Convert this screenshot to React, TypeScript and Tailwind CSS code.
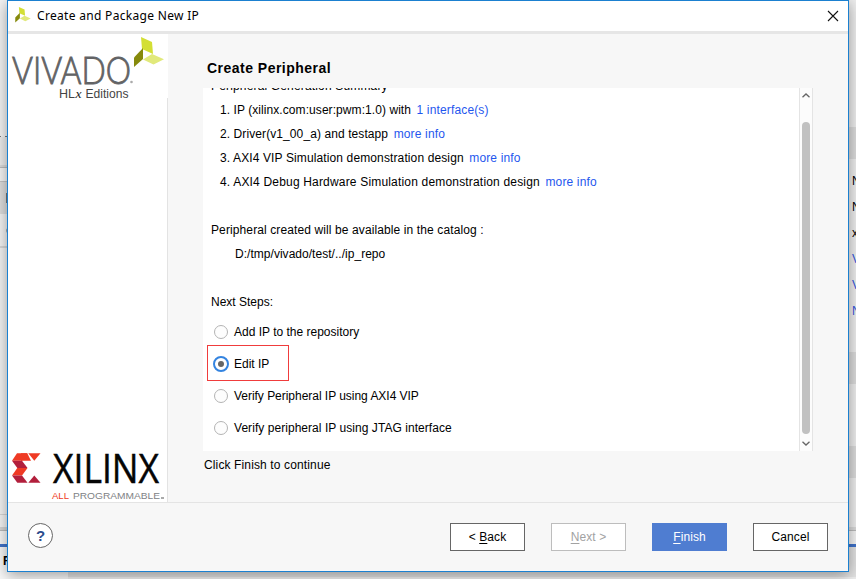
import React from "react";

const sans = "font-['Liberation_Sans',Arial,sans-serif]";

function LeafShapes() {
  return (
    <>
      <path d="M7 0L18 5L19 17L8 12Z" fill="#d3df35" />
      <path d="M0 20.5L9 11L9 22L0 30Z" fill="#868a0c" />
      <path d="M9 22.5L18 17L30 22.3L19.5 27.5Z" fill="#e1e97b" />
    </>
  );
}

function Leaf({ className }: { className: string }) {
  return (
    <svg viewBox="0 0 30 31" className={className}>
      <LeafShapes />
    </svg>
  );
}

function VivadoLogo() {
  return (
    <svg viewBox="0 0 160 64" className="block h-16 w-[160px] bg-white">
      <text x="4" y="49.5" textLength="119" lengthAdjust="spacingAndGlyphs" fontSize="38" fontWeight="300" fontFamily="Lato, sans-serif" fill="#626365" stroke="#626365" strokeWidth="0.9">VIVADO</text>
      <circle cx="123.5" cy="48" r="1.3" fill="#aaa" />
      <text x="51" y="63.5" fontSize="12.5" textLength="16" lengthAdjust="spacingAndGlyphs" fontFamily="Liberation Sans, sans-serif" fill="#444">HL</text>
      <text x="67.5" y="63.5" fontSize="13.5" fontStyle="italic" fontFamily="Liberation Serif, serif" fill="#222">x</text>
      <text x="77.5" y="63.5" fontSize="12.5" textLength="43" lengthAdjust="spacingAndGlyphs" fontFamily="Liberation Sans, sans-serif" fill="#444">Editions</text>
      <svg x="126" y="3" width="30" height="31" viewBox="0 0 30 31">
        <LeafShapes />
      </svg>
    </svg>
  );
}

function XilinxLogo() {
  return (
    <svg viewBox="0 0 159 52" className="block h-[52px] w-[159px]">
      <path d="M9 3.3H19.3L14 10.7H4Z" fill="#ef3a24" />
      <path d="M13 3.3H19.3L23 10.7H13Z" fill="#ef3a24" />
      <path d="M20.3 3.3H32.5L26.3 10.7Z" fill="#ef3a24" />
      <path d="M4 10.7H14L19.5 18H9.3Z" fill="#b21f3c" />
      <path d="M9.3 18H19.5L14 25.5H4Z" fill="#ef3a24" />
      <path d="M4 25.5H14L19.5 32.8H9.3Z" fill="#b21f3c" />
      <path d="M20.3 32.8L26.3 25.5L32.5 32.8Z" fill="#b21f3c" />
      <text x="45" y="33" fontSize="41" textLength="106" lengthAdjust="spacingAndGlyphs" fontFamily="Open Sans, sans-serif" fill="#050505" stroke="#050505" strokeWidth="0.5">XILINX</text>
      <text x="44" y="49" fontSize="9.5" textLength="17" lengthAdjust="spacingAndGlyphs" fontFamily="Liberation Sans, sans-serif" fill="#ef3a24">ALL</text>
      <text x="65" y="49" fontSize="9.5" textLength="87" lengthAdjust="spacingAndGlyphs" fontFamily="Liberation Sans, sans-serif" fill="#808285">PROGRAMMABLE</text>
      <rect x="153" y="47" width="3" height="2" fill="#aaa" />
    </svg>
  );
}

function Line({ children, className = "" }: { children?: React.ReactNode; className?: string }) {
  return <div className={`h-6 shrink-0 whitespace-pre leading-6 ${className}`}>{children}</div>;
}

function Link({ children }: { children: React.ReactNode }) {
  return <a className="ml-[5.5px] tracking-[0.15px] text-[#1f57ee]">{children}</a>;
}

function Radio({ label, checked, className = "" }: { label: string; checked?: boolean; className?: string }) {
  return (
    <div className="flex h-8 shrink-0 items-center pl-0.5">
      <span className="flex w-4 shrink-0 items-center justify-center">
        {checked ? (
          <span className="flex size-4 items-center justify-center rounded-full border-2 border-[#3484e0] bg-white">
            <span className="size-1.5 rounded-full bg-[#666]" />
          </span>
        ) : (
          <span className="size-3.5 rounded-full border border-[#b4b4b4] bg-[#fdfdfd]" />
        )}
      </span>
      <span className={`ml-[5px] whitespace-pre ${className}`}>{label}</span>
    </div>
  );
}

function Backdrop() {
  return (
    <div className="flex h-full flex-col">
      <div className="flex flex-1 justify-between overflow-hidden">
        <div className="flex w-7 flex-col bg-[#f4f4f4]">
          <div className="h-[136px]" />
          <div className="flex h-px gap-1">
            <div className="w-px bg-[#777]" />
            <div className="w-1 bg-[#777]" />
          </div>
          <div className="h-7 bg-[#ededed]" />
          <div className="h-0.5 bg-[#dcdcdc]" />
          <div className="h-px bg-[#bcbcbc]" />
          <div className="h-[13px] bg-[#f6f6f6]" />
          <div className="h-px bg-[#c5c5c5]" />
          <div className="flex h-8 items-center bg-[#dedede] pl-1.5">
            <div className="h-2.5 w-2 bg-[#777]" />
          </div>
          <div className="flex h-8 items-center bg-[#f4f4f4] pl-1.5">
            <div className="h-[5px] w-2 rounded-l bg-[#aaa]" />
          </div>
          <div className="h-0.5 bg-[#d8d8d8]" />
          <div className="flex-1" />
          <div className="h-px bg-[#d7d7d7]" />
          <div className="h-3" />
          <div className="h-[3px] bg-[#d5d5d5]" />
          <div className="h-px bg-[#bbb]" />
          <div className="h-[13px] bg-[#f8f8f8]" />
        </div>
        <div className="flex w-4 flex-col bg-[#eeeeee] text-xs leading-[26px]">
          <div className="h-[127px]" />
          <div className="h-8 bg-[#dcdcdc]" />
          <div className="h-[9px]" />
          <div className="h-[158px] pl-3">
            {["N", "N", "x"].map((s, i) => <div key={i}>{s}</div>)}
            {["V", "V", "N"].map((s, i) => <div key={i} className="text-[#3455dc]">{s}</div>)}
          </div>
          <div className="mt-[26px] h-8 bg-[#dcdcdc]" />
          <div className="mt-[62px] h-8 bg-[#dcdcdc]" />
          <div className="flex-1" />
          <div className="h-[3px] bg-[#dadada]" />
          <div className="h-px bg-[#bbb]" />
          <div className="h-[13px] bg-[#f4f4f4]" />
        </div>
      </div>
      <div className="h-[3px] bg-[#4173ca]" />
      <div className="flex h-8 bg-[#e2e2e2]">
        <div className="w-[68px] bg-[#f8f8f8] pl-[3px] pt-[6px] text-xs font-bold">F</div>
        <div className="mt-[30px] h-0.5 flex-1 bg-[#eee]" />
      </div>
    </div>
  );
}

const button = "flex h-7 w-[75px] items-center justify-center border tracking-[0.1px]";

export default function App() {
  return (
    <div className={`relative h-[579px] w-[856px] overflow-hidden text-xs text-black ${sans}`}>
      <Backdrop />
      <div className="absolute left-[7px] top-0 flex h-[572px] w-[842px] flex-col border border-[#1b80d0] bg-[#f7f7f7] shadow-[0_3px_14px_rgba(0,0,0,0.38)]">
        <header className="flex h-[30px] shrink-0 items-center bg-white pl-[7px] pr-[9px]">
          <Leaf className="mt-[-3px] h-4 w-4" />
          <span className="ml-1.5 font-['Noto_Sans',sans-serif] text-[12px] tracking-[0.31px]">Create and Package New IP</span>
          <svg viewBox="0 0 12 12" className="ml-auto mt-[-1px] h-3 w-3" stroke="#111" strokeWidth="1.1">
            <path d="M1 1L11 11M11 1L1 11" />
          </svg>
        </header>
        <div className="h-[3px] shrink-0 bg-[#e6e6e6]" />
        <div className="flex h-[468px] shrink-0">
          <aside className="flex w-40 shrink-0 flex-col justify-between bg-white">
            <VivadoLogo />
            <div className="flex flex-1 items-end border-r border-[#e3e3e3]">
              <XilinxLogo />
            </div>
          </aside>
          <main className="flex flex-1 flex-col pl-[35px]">
            <h1 className="h-[54px] pl-1 pt-[25px] text-[14px] font-bold leading-[18px] tracking-[0.48px]">Create Peripheral</h1>
            <div className="flex h-[363px] w-[610px] shrink-0">
              <div className="flex flex-1 flex-col overflow-hidden bg-white pl-2">
                <Line className="-mt-3.5 tracking-[0.16px]">Peripheral Generation Summary</Line>
                <Line className="pl-[9px] tracking-[0.07px]">1. IP (xilinx.com:user:pwm:1.0) with<Link>1 interface(s)</Link></Line>
                <Line className="pl-[9px] tracking-[0.09px]">2. Driver(v1_00_a) and testapp<Link>more info</Link></Line>
                <Line className="pl-[9px] tracking-[0.12px]">3. AXI4 VIP Simulation demonstration design<Link>more info</Link></Line>
                <Line className="pl-[9px] tracking-[0.18px]">4. AXI4 Debug Hardware Simulation demonstration design<Link>more info</Link></Line>
                <Line />
                <Line className="tracking-[0.11px]">Peripheral created will be available in the catalog :</Line>
                <Line className="pl-6 tracking-[0.03px]">D:/tmp/vivado/test/../ip_repo</Line>
                <Line />
                <Line className="mb-0.5">Next Steps:</Line>
                <Radio label="Add IP to the repository" />
                <div className="relative">
                  <Radio label="Edit IP" checked />
                  <div className="absolute left-[-4px] top-[-3px] h-9 w-[82px] border border-[#f03c3c]" />
                </div>
                <Radio label="Verify Peripheral IP using AXI4 VIP" className="tracking-[-0.03px]" />
                <Radio label="Verify peripheral IP using JTAG interface" className="tracking-[0.05px]" />
              </div>
              <div className="flex w-3.5 flex-col items-center border-x border-[#e4e4e4] bg-[#fcfcfc]">
                <svg viewBox="0 0 8 5" className="mt-[5px] h-[5px] w-2" fill="none" stroke="#666" strokeWidth="1.3"><path d="M.5 4.3L4 1L7.5 4.3" /></svg>
                <div className="mt-6 h-[312px] w-2 rounded-full bg-[#c1c1c1]" />
                <svg viewBox="0 0 8 5" className="mt-[7px] h-[5px] w-2" fill="none" stroke="#666" strokeWidth="1.3"><path d="M.5 .7L4 4L7.5 .7" /></svg>
              </div>
            </div>
            <p className="mt-[5px] pl-px leading-[18px] tracking-[0.13px]">Click Finish to continue</p>
          </main>
        </div>
        <footer className="flex flex-1 items-start border-t border-[#e4e4e4] pl-5 pr-5 pt-5">
          <span className="flex size-[25px] items-center justify-center rounded-full border border-[#666] bg-white text-[15px] font-bold text-[#2b4c8c]">?</span>
          <div className="ml-auto flex gap-[26px]">
            <span className={`${button} border-[#666] bg-white`}>&lt;&nbsp;<u className="underline-offset-2">B</u>ack</span>
            <span className={`${button} border-[#bdbdbd] bg-white text-[#a2a2a2]`}><u className="underline-offset-2">N</u>ext&nbsp;&gt;</span>
            <span className={`${button} border-[#4f7dd1] bg-[#4f7dd1] text-white`}><u className="underline-offset-2">F</u>inish</span>
            <span className={`${button} border-[#666] bg-white`}>Cancel</span>
          </div>
        </footer>
      </div>
    </div>
  );
}
